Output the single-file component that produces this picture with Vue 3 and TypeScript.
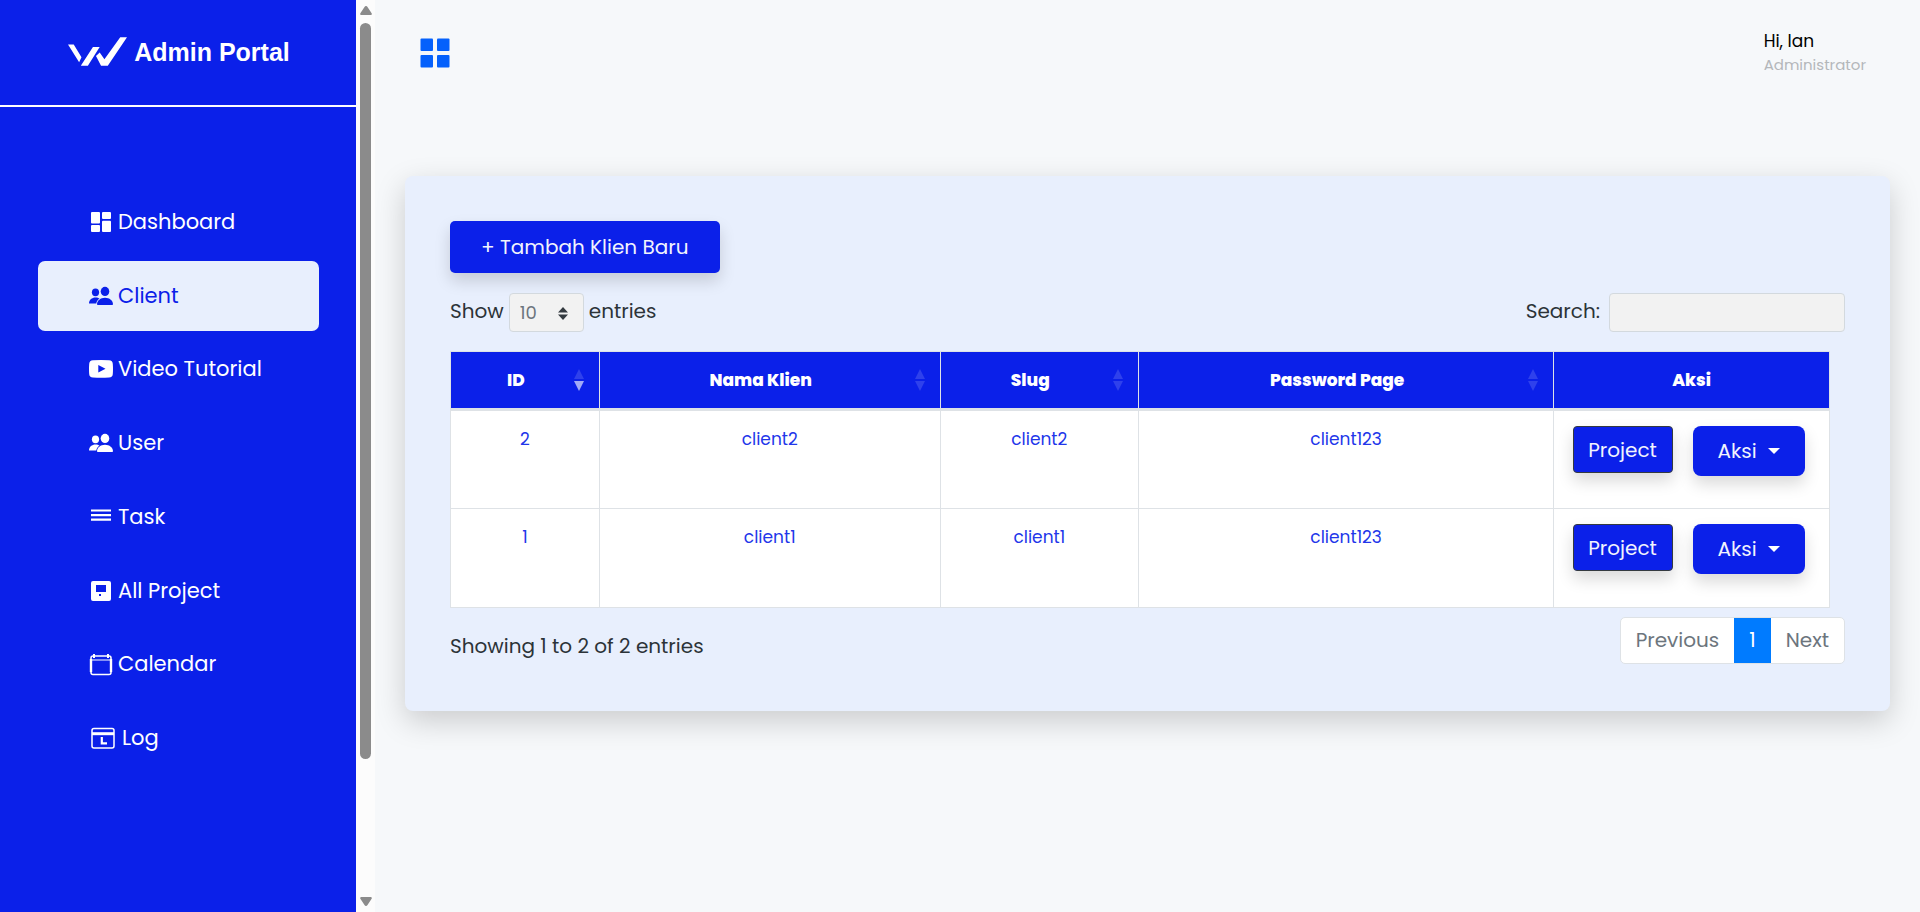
<script setup lang="ts">
import { ref, computed } from 'vue'

type IconName = 'dashboard' | 'people' | 'video' | 'task' | 'project' | 'calendar' | 'log'

interface MenuItem {
  label: string
  icon: IconName
}

interface Client {
  id: number
  name: string
  slug: string
  password: string
}

const menu: MenuItem[] = [
  { label: 'Dashboard', icon: 'dashboard' },
  { label: 'Client', icon: 'people' },
  { label: 'Video Tutorial', icon: 'video' },
  { label: 'User', icon: 'people' },
  { label: 'Task', icon: 'task' },
  { label: 'All Project', icon: 'project' },
  { label: 'Calendar', icon: 'calendar' },
  { label: 'Log', icon: 'log' },
]

const active = ref('Client')
const pageSize = ref('10')
const search = ref('')

const columns = [
  { label: 'ID', cls: 'c-id', sorted: true },
  { label: 'Nama Klien', cls: 'c-name', sorted: false },
  { label: 'Slug', cls: 'c-slug', sorted: false },
  { label: 'Password Page', cls: 'c-pass', sorted: false },
]

const clients: Client[] = [
  { id: 2, name: 'client2', slug: 'client2', password: 'client123' },
  { id: 1, name: 'client1', slug: 'client1', password: 'client123' },
]

const rows = computed(() => clients.filter((c) => c.name.includes(search.value.toLowerCase())))
</script>

<template>
  <div class="page">
    <aside class="sidebar">
      <div class="brand">
        <svg class="logo" viewBox="205 116 175 86" aria-hidden="true">
          <path d="M205 138H222L245 176L238 191ZM243 201L279 146H299L264 201ZM288 172L299 162L313 182L360 117H380L323 201H303Z" />
        </svg>
        <span>Admin Portal</span>
      </div>
      <nav class="menu">
        <a
          v-for="item in menu"
          :key="item.label"
          href="#"
          class="item"
          :class="{ active: item.label === active }"
          @click.prevent="active = item.label"
        >
          <svg v-if="item.icon === 'dashboard'" class="icon" viewBox="0 0 24 24">
            <rect x="2" y="2" width="9" height="11.500" rx="1" />
            <rect x="2" y="15" width="9" height="7" rx="1" />
            <rect x="13" y="2" width="9" height="7" rx="1" />
            <rect x="13" y="10.800" width="9" height="11.200" rx="1" />
          </svg>
          <svg v-else-if="item.icon === 'people'" class="icon" viewBox="0 0 24 24">
            <ellipse cx="6.500" cy="8.300" rx="3.600" ry="3.900" />
            <path d="M0 19.500C0 15.500 3 13.400 6.500 13.400C8.200 13.400 9.600 13.800 10.600 14.500C8.700 15.600 7.500 17.500 7.300 19.500Z" />
            <ellipse cx="16" cy="7.400" rx="4.300" ry="4.600" />
            <path d="M16 13.700C20.500 13.700 24 16.500 24 20.300C24 20.800 23.600 21 23.200 21H8.800C8.400 21 8 20.800 8 20.300C8 16.500 11.500 13.700 16 13.700Z" />
          </svg>
          <svg v-else-if="item.icon === 'video'" class="icon" viewBox="0 0 24 24">
            <path fill-rule="evenodd" d="M4 3.300Q12 2.700 20 3.300Q23.700 3.500 23.800 7Q24.200 12 23.800 17Q23.700 20.200 20 20.500Q12 21 4 20.500Q0.300 20.200 0.200 17Q-0.200 12 0.200 7Q0.300 3.500 4 3.300ZM9.300 8V15.500L16.500 11.800Z" />
          </svg>
          <svg v-else-if="item.icon === 'task'" class="icon" viewBox="0 0 24 24">
            <path d="M2 4.500H22V6.500H2ZM2 9H22V11.200H2ZM2 13.500H22V15.700H2Z" />
          </svg>
          <svg v-else-if="item.icon === 'project'" class="icon" viewBox="0 0 24 24">
            <path fill-rule="evenodd" d="M4 2H20Q22 2 22 4V20Q22 22 20 22H4Q2 22 2 20V4Q2 2 4 2ZM7 6V13H17V6ZM10 15V17H12V15Z" />
          </svg>
          <svg v-else-if="item.icon === 'calendar'" class="icon outline" viewBox="0 0 24 24">
            <rect x="2" y="4" width="20" height="18.500" rx="2" />
            <path d="M2 8H22" stroke-width="1" />
            <path d="M2 7V20M22 7V20" stroke-width="2.400" />
            <path d="M5 2V6M19 2V6" stroke-width="2" />
          </svg>
          <svg v-else class="icon wide outline" viewBox="0 0 28 24">
            <rect x="3" y="2.500" width="22" height="19.500" rx="2" />
            <path d="M3 7.700H25" stroke-width="3" />
            <path d="M12.800 11V17.300H18" stroke-width="2.200" />
          </svg>
          <span>{{ item.label }}</span>
        </a>
      </nav>
    </aside>

    <div class="scroller" aria-hidden="true">
      <svg class="arrow" viewBox="0 0 12 9"><path d="M6 0Q7 0 7.500 1L11.800 7.500Q12 9 11 9H1Q0 9 0.200 7.500L4.500 1Q5 0 6 0Z" /></svg>
      <div class="track"><div class="thumb"></div></div>
      <svg class="arrow" viewBox="0 0 12 9"><path d="M6 9Q7 9 7.500 8L11.800 1.500Q12 0 11 0H1Q0 0 0.200 1.500L4.500 8Q5 9 6 9Z" /></svg>
    </div>

    <main class="main">
      <header class="topbar">
        <button class="grid-btn" type="button" aria-label="Toggle menu">
          <svg viewBox="0 0 30 30">
            <rect x="0.500" y="0.500" width="12.500" height="12.500" rx="1" />
            <rect x="17" y="0.500" width="12.500" height="12.500" rx="1" />
            <rect x="0.500" y="17" width="12.500" height="12.500" rx="1" />
            <rect x="17" y="17" width="12.500" height="12.500" rx="1" />
          </svg>
        </button>
        <div class="user">
          <div class="hello">Hi, Ian</div>
          <div class="role">Administrator</div>
        </div>
      </header>

      <section class="card">
        <button class="add" type="button">+ Tambah Klien Baru</button>

        <div class="controls">
          <label class="length">
            <span>Show</span>
            <span class="select-wrap">
              <select v-model="pageSize">
                <option>10</option>
                <option>25</option>
                <option>50</option>
                <option>100</option>
              </select>
              <svg class="updown" viewBox="0 0 10 13"><path d="M5 0L10 5.500H0ZM5 13L0 7.500H10Z" /></svg>
            </span>
            <span>entries</span>
          </label>
          <label class="search">
            <span>Search:</span>
            <input v-model="search" type="search" />
          </label>
        </div>

        <table>
          <colgroup>
            <col v-for="c in columns" :key="c.label" :class="c.cls" />
            <col class="c-act" />
          </colgroup>
          <thead>
            <tr>
              <th v-for="c in columns" :key="c.label" scope="col" class="sortable">
                {{ c.label }}
                <svg class="sort" :class="{ sorted: c.sorted }" viewBox="0 0 10 22">
                  <path d="M5 0L10 10H0Z" />
                  <path class="down" d="M0 12H10L5 22Z" />
                </svg>
              </th>
              <th scope="col">Aksi</th>
            </tr>
          </thead>
          <tbody>
            <tr v-for="row in rows" :key="row.id">
              <td>{{ row.id }}</td>
              <td>{{ row.name }}</td>
              <td>{{ row.slug }}</td>
              <td>{{ row.password }}</td>
              <td>
                <div class="actions">
                  <button class="project" type="button">Project</button>
                  <button class="aksi" type="button">
                    Aksi
                    <svg viewBox="0 0 12 6"><path d="M0 0H12L6 6Z" /></svg>
                  </button>
                </div>
              </td>
            </tr>
          </tbody>
        </table>

        <div class="footer">
          <div class="info">Showing 1 to 2 of 2 entries</div>
          <nav class="pages" aria-label="Pagination">
            <a href="#" @click.prevent>Previous</a>
            <a href="#" class="current" @click.prevent>1</a>
            <a href="#" @click.prevent>Next</a>
          </nav>
        </div>
      </section>
    </main>
  </div>
</template>

<style>
body {
  margin: 0;
}
</style>

<style scoped>
* {
  box-sizing: border-box;
}

.page {
  display: flex;
  min-height: 100vh;
  background: #f6f8fa;
  font-family: Poppins, Inter, 'Open Sans', sans-serif;
  font-size: 20px;
  line-height: 30px;
  color: #2c3338;
}

button,
input,
select {
  font: inherit;
}

.sidebar {
  flex: 0 0 356px;
  background: #0b20e9;
  color: #fff;
}

.brand {
  display: flex;
  align-items: center;
  justify-content: center;
  gap: 7px;
  height: 107px;
  padding: 0 0 2px 2px;
  border-bottom: 2px solid #fff;
  font-family: 'Liberation Sans', Arial, sans-serif;
  font-size: 25px;
  font-weight: 700;
}

.logo {
  width: 59px;
  height: 29px;
  fill: #fff;
}

.menu {
  display: flex;
  flex-direction: column;
  justify-content: space-between;
  height: 586px;
  margin: 80px 37px 0 38px;
}

.item {
  display: flex;
  align-items: center;
  gap: 5px;
  height: 70px;
  padding-left: 51px;
  border-radius: 7px;
  color: #fff;
  font-size: 21px;
  line-height: 32px;
  text-decoration: none;
}

.item.active {
  background: #e8effd;
  color: #0b20e9;
}

.icon {
  width: 24px;
  height: 24px;
  fill: currentColor;
}

.icon.wide {
  width: 28px;
}

.icon.outline {
  fill: none;
  stroke: currentColor;
  stroke-width: 1.5;
}

.scroller {
  display: flex;
  flex: 0 0 19px;
  flex-direction: column;
  align-items: center;
  gap: 8px;
  padding: 6px 0;
  background: #fcfcfc;
}

.arrow {
  width: 12px;
  height: 9px;
  fill: #8b8b8b;
}

.track {
  flex: 1;
  width: 11px;
}

.thumb {
  height: 85%;
  border-radius: 6px;
  background: #8b8b8b;
}

.main {
  flex: 1;
  min-width: 0;
  padding: 0 30px;
}

.topbar {
  display: flex;
  align-items: flex-start;
  justify-content: space-between;
  height: 176px;
  padding: 29px 24px 0 15px;
}

.grid-btn {
  width: 30px;
  height: 30px;
  margin-top: 9px;
  padding: 0;
  border: 0;
  background: none;
}

.grid-btn svg {
  display: block;
  fill: #0561fc;
}

.hello {
  font-size: 17px;
  line-height: 24px;
  color: #000;
}

.role {
  font-size: 15px;
  line-height: 24px;
  color: #b4b7ba;
}

.card {
  padding: 45px 45px 47px;
  border-radius: 8px;
  background: #e8effd;
  box-shadow: 0 10px 30px rgba(0, 0, 0, 0.18);
}

.add {
  display: block;
  height: 52px;
  padding: 0 31px;
  border: 0;
  border-radius: 5px;
  background: #0b20e9;
  color: #f1f3fd;
  box-shadow: 0 8px 16px rgba(0, 0, 0, 0.15);
}

.controls {
  display: flex;
  justify-content: space-between;
  margin: 20px 0 19px;
}

.length,
.search {
  display: flex;
}

.length {
  gap: 5px;
}

.search {
  gap: 9px;
}

.length > span,
.search > span {
  line-height: 36px;
}

.select-wrap {
  position: relative;
}

.select-wrap select {
  display: block;
  width: 75px;
  height: 39px;
  padding: 0 10px;
  border: 1px solid #d3d9de;
  border-radius: 4px;
  background: #f2f2f2;
  color: #6c757d;
  font-size: 18px;
  appearance: none;
}

.updown {
  position: absolute;
  top: 14px;
  right: 16px;
  width: 10px;
  height: 13px;
  fill: #343a40;
  pointer-events: none;
}

.search input {
  width: 236px;
  height: 39px;
  padding: 0 10px;
  border: 1px solid #d3d9de;
  border-radius: 4px;
  background: #f2f2f2;
}

table {
  width: calc(100% - 15px);
  border-collapse: collapse;
  table-layout: fixed;
  background: #fff;
  font-size: 17px;
  line-height: 26px;
  text-align: center;
}

.c-id {
  width: 10.8%;
}

.c-name {
  width: 24.7%;
}

.c-slug {
  width: 14.4%;
}

.c-pass {
  width: 30.1%;
}

.c-act {
  width: 20%;
}

th {
  position: relative;
  height: 58px;
  padding: 0;
  border: 1px solid #dee2e6;
  border-bottom: 3px solid #dee2e6;
  background: #0b20e9;
  background-clip: padding-box;
  color: #fff;
  font-weight: 800;
}

th.sortable {
  padding-right: 18px;
}

.sort {
  position: absolute;
  top: 17px;
  right: 15px;
  width: 10px;
  height: 22px;
  fill: rgba(255, 255, 255, 0.15);
}

.sort.sorted .down {
  fill: rgba(255, 255, 255, 0.62);
}

td {
  height: 99px;
  padding: 15px 0 0;
  border: 1px solid #dee2e6;
  color: #2236ea;
  vertical-align: top;
}

.actions {
  display: flex;
  align-items: flex-start;
  justify-content: center;
  gap: 20px;
  padding-right: 6px;
}

.project,
.aksi {
  padding: 0;
  background: #0b20e9;
  color: #f1f3fd;
  font-size: 20px;
  box-shadow: 0 8px 16px rgba(0, 0, 0, 0.15);
}

.project {
  width: 100px;
  height: 47px;
  border: 1px solid #343a40;
  border-radius: 4px;
}

.aksi {
  display: flex;
  align-items: center;
  justify-content: center;
  gap: 11px;
  width: 112px;
  height: 50px;
  border: 0;
  border-radius: 8px;
}

.aksi svg {
  width: 12px;
  height: 6px;
  fill: #fff;
}

.footer {
  display: flex;
  align-items: flex-start;
  justify-content: space-between;
  margin-top: 9px;
}

.info {
  padding-top: 14px;
}

.pages {
  display: flex;
  overflow: hidden;
  border: 1px solid #dee2e6;
  border-radius: 5px;
  background: #fff;
}

.pages a {
  padding: 0 15px;
  color: #6c757d;
  line-height: 45px;
  text-decoration: none;
}

.pages .current {
  background: #007bff;
  color: #fff;
}
</style>
